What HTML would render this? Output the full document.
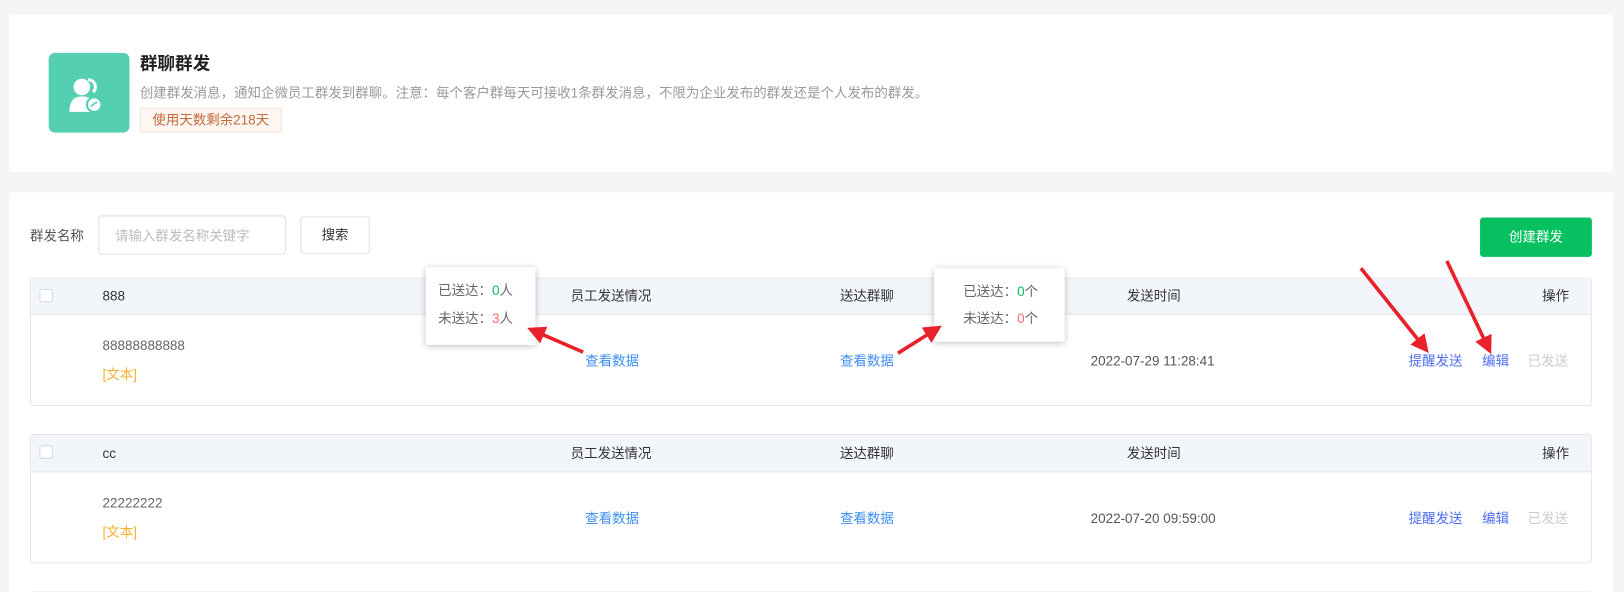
<!DOCTYPE html>
<html><head><meta charset="utf-8"><style>
*{margin:0;padding:0;box-sizing:border-box}
html,body{width:1624px;height:592px;overflow:hidden}
body{background:#f4f5f7;font-family:"Liberation Sans","Noto Sans CJK SC",sans-serif;font-size:13px;color:#333;position:relative}
#w{position:absolute;left:0;top:0;width:1568px;height:572px;overflow:hidden;transform:scale(1.03572);transform-origin:0 0}
.a{position:absolute;white-space:nowrap;line-height:17px}
.card{position:absolute;background:#fff}
.row{position:absolute;left:29px;width:1508px;border:1px solid #e3e6ec;border-radius:3px;background:#fff}
.hd{height:35px;background:#f2f5f9;border-bottom:1px solid #e3e6ec;position:relative}
.cb{position:absolute;left:8px;top:10px;width:13px;height:13px;border:1px solid #d6d9df;border-radius:2px;background:#fff}
.blue{color:#3d8ef5}
.tip{position:absolute;background:#fff;box-shadow:0 1px 6px rgba(0,0,0,.25);font-size:13px;color:#666}
</style></head><body><div id="w">
<div class="card" style="left:9px;top:14px;width:1548px;height:152px"></div>
<div class="a" style="left:47px;top:51px;width:78px;height:77px;background:#55cfb2;border-radius:6px">
<svg width="78" height="77" viewBox="0 0 78 77"><circle cx="32" cy="33" r="8" fill="#fff"/><path d="M20 57c0-11 5-15 12-15s10 3 11 6l0 9z" fill="#fff"/><path d="M38 26a7 7 0 0 1 5 12" stroke="#fff" stroke-width="3" fill="none"/><circle cx="44" cy="50" r="7" fill="#fff" stroke="#55cfb2" stroke-width="2"/><path d="M41 52c2-3 4-4 6-4" stroke="#55cfb2" stroke-width="1.5" fill="none"/></svg></div>
<div class="a" style="left:135px;top:53px;font-size:17px;font-weight:bold;color:#222">群聊群发</div>
<div class="a" style="left:135px;top:81px;font-size:13px;color:#999">创建群发消息，通知企微员工群发到群聊。注意：每个客户群每天可接收1条群发消息，不限为企业发布的群发还是个人发布的群发。</div>
<div class="a" style="left:135px;top:104px;width:137px;height:24px;border:1px solid #fbe3d3;background:#fdf6f1;color:#c46a3c;font-size:13px;line-height:22px;text-align:center">使用天数剩余218天</div>

<div class="card" style="left:9px;top:186px;width:1548px;height:400px"></div>
<div class="a" style="left:29px;top:219px;color:#555">群发名称</div>
<div class="a" style="left:95px;top:208px;width:181px;height:38px;border:1px solid #dcdfe6;border-radius:3px;color:#bbb;padding:10px 0 0 15px">请输入群发名称关键字</div>
<div class="a" style="left:290px;top:209px;width:67px;height:36px;border:1px solid #dcdfe6;border-radius:3px;color:#333;text-align:center;line-height:34px">搜索</div>
<div class="a" style="left:1429px;top:210px;width:108px;height:38px;background:#07c160;border-radius:3px;color:#fff;text-align:center;line-height:38px">创建群发</div>

<div class="row" style="top:268px;height:124px"><div class="hd"><div class="cb"></div>
<span class="a" style="left:69px;top:8px">888</span><span class="a" style="left:521px;top:8px">员工发送情况</span><span class="a" style="left:781px;top:8px">送达群聊</span><span class="a" style="left:1058px;top:8px">发送时间</span><span class="a" style="left:1459px;top:8px">操作</span></div>
<span class="a" style="left:69px;top:56px;color:#666">88888888888</span><span class="a" style="left:69px;top:84px;color:#f5b12c">[文本]</span>
<span class="a blue" style="left:535px;top:71px">查看数据</span><span class="a blue" style="left:781px;top:71px">查看数据</span>
<span class="a" style="left:1023px;top:71px;color:#555">2022-07-29 11:28:41</span>
<span class="a" style="left:1330px;top:71px;color:#4e6ef2">提醒发送</span><span class="a" style="left:1401px;top:71px;color:#4e6ef2">编辑</span><span class="a" style="left:1445px;top:71px;color:#c8ccd4">已发送</span></div>

<div class="row" style="top:419px;height:125px"><div class="hd" style="height:36px"><div class="cb"></div>
<span class="a" style="left:69px;top:9px">cc</span><span class="a" style="left:521px;top:9px">员工发送情况</span><span class="a" style="left:781px;top:9px">送达群聊</span><span class="a" style="left:1058px;top:9px">发送时间</span><span class="a" style="left:1459px;top:9px">操作</span></div>
<span class="a" style="left:69px;top:57px;color:#666">22222222</span><span class="a" style="left:69px;top:85px;color:#f5b12c">[文本]</span>
<span class="a blue" style="left:535px;top:72px">查看数据</span><span class="a blue" style="left:781px;top:72px">查看数据</span>
<span class="a" style="left:1023px;top:72px;color:#555">2022-07-20 09:59:00</span>
<span class="a" style="left:1330px;top:72px;color:#4e6ef2">提醒发送</span><span class="a" style="left:1401px;top:72px;color:#4e6ef2">编辑</span><span class="a" style="left:1445px;top:72px;color:#c8ccd4">已发送</span></div>
<div class="row" style="top:571px;height:10px;border-bottom:none"></div>

<div class="tip" style="left:411px;top:258px;width:106px;height:75px"><div class="a" style="left:12px;top:14px">已送达：<span style="color:#07c160">0</span>人</div><div class="a" style="left:12px;top:41px">未送达：<span style="color:#f56c6c">3</span>人</div></div>
<div class="tip" style="left:902px;top:259px;width:126px;height:71px"><div class="a" style="left:28px;top:14px">已送达：<span style="color:#07c160">0</span>个</div><div class="a" style="left:28px;top:40px">未送达：<span style="color:#f56c6c">0</span>个</div></div>

<svg class="a" style="left:0;top:0" width="1568" height="572">
<defs><marker id="m" markerWidth="5" markerHeight="5" refX="2.5" refY="2.5" orient="auto"><path d="M0 0L5 2.5L0 5z" fill="#e8212a"/></marker></defs>
<g stroke="#e8212a" stroke-width="3.5" marker-end="url(#m)">
<line x1="563" y1="340" x2="517" y2="320"/>
<line x1="867" y1="341" x2="902" y2="319"/>
<line x1="1314" y1="259" x2="1374" y2="334"/>
<line x1="1397" y1="252" x2="1436" y2="334"/>
</g></svg>
</div></body></html>
